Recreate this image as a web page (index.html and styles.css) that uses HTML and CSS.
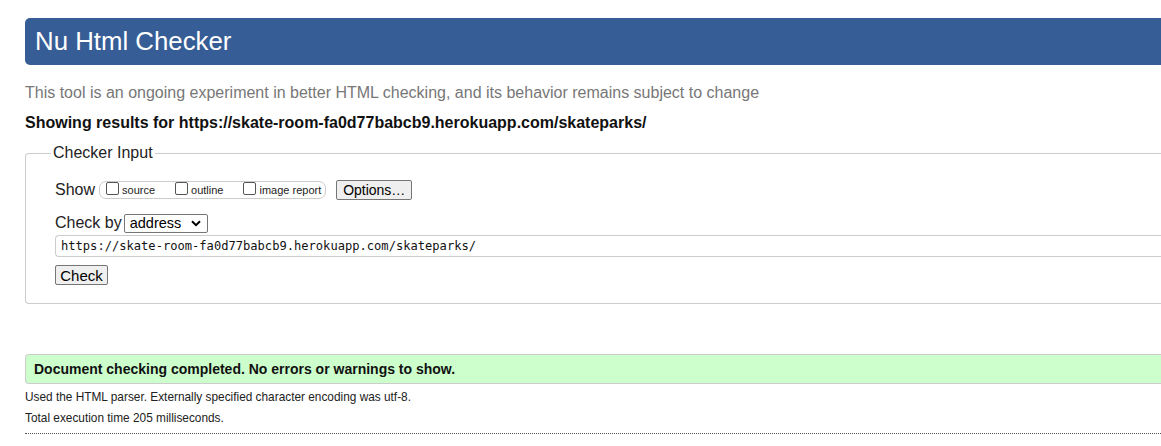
FILE: index.html
```html
<!DOCTYPE html>
<html>
<head>
<meta charset="utf-8">
<title>Nu Html Checker</title>
<link rel="stylesheet" href="styles.css">
</head>
<body>
<div class="page">
  <h1 class="title">Nu Html Checker</h1>
  <p class="intro">This tool is an ongoing experiment in better HTML checking, and its behavior remains subject to change</p>
  <p class="showing">Showing results for https://skate-room-fa0d77babcb9.herokuapp.com/skateparks/</p>
  <fieldset class="checker">
    <legend class="legend">Checker Input</legend>
    <div class="row show-row">
      <span class="label">Show</span>
      <span class="show-box">
        <label class="opt"><span class="cb"></span>source</label>
        <label class="opt"><span class="cb"></span>outline</label>
        <label class="opt"><span class="cb"></span>image report</label>
      </span>
      <span class="btn options">Options…</span>
    </div>
    <div class="row by-row">
      <span class="label">Check by</span>
      <span class="select">address<svg class="chev" width="10" height="7" viewBox="0 0 10 7"><path d="M1 1.2 L5 5.2 L9 1.2" fill="none" stroke="#000" stroke-width="2"/></svg></span>
    </div>
    <div class="url">https://skate-room-fa0d77babcb9.herokuapp.com/skateparks/</div>
    <div class="row check-row"><span class="btn check">Check</span></div>
  </fieldset>
  <div class="success">Document checking completed. No errors or warnings to show.</div>
  <p class="details">Used the HTML parser. Externally specified character encoding was utf-8.</p>
  <p class="details">Total execution time 205 milliseconds.</p>
  <div class="dotted"></div>
</div>
</body>
</html>
```

FILE: styles.css
```css
html, body {
  margin: 0;
  padding: 0;
  background: #fff;
  overflow: hidden;
}
body {
  font-family: "Liberation Sans", Arial, sans-serif;
  color: #222;
}
.page {
  width: 1200px;
  padding: 18px 0 0 25px;
}
.title {
  margin: 0;
  height: 47px;
  box-sizing: border-box;
  padding: 8px 0 0 10px;
  background: #365d95;
  color: #fff;
  font-weight: normal;
  font-size: 25.8px;
  line-height: 30px;
  border-radius: 5px 0 0 5px;
}
.intro {
  margin: 18px 0 0 0;
  font-size: 16px;
  line-height: 20px;
  color: #777;
}
.showing {
  margin: 10px 0 0 0;
  font-size: 16px;
  line-height: 20px;
  font-weight: bold;
  color: #111;
}
.checker {
  margin: 11px 0 0 0;
  border: 1px solid #ccc;
  border-right: none;
  border-radius: 4px 0 0 4px;
  padding: 0 0 17px 29px;
  min-width: 0;
  height: 160px;
  box-sizing: border-box;
}
.legend {
  margin-left: -4px;
  padding: 0 2px;
  font-size: 16px;
  color: #222;
}
.row {
  display: flex;
  align-items: center;
}
.label {
  font-size: 16px;
  color: #222;
}
.show-row {
  margin-top: 17px;
  height: 22px;
}
.show-box {
  display: flex;
  align-items: center;
  margin-left: 4px;
  height: 16px;
  border: 1px solid #ccc;
  border-radius: 7px;
  padding: 0 4px 0 6px;
  font-size: 11px;
  color: #222;
}
.opt {
  display: flex;
  align-items: center;
  margin-right: 20px;
}
.opt:last-child {
  margin-right: 0;
}
.cb {
  width: 11px;
  height: 11px;
  border: 1px solid #555;
  border-radius: 2px;
  margin-right: 3px;
  margin-top: -3px;
}
.btn {
  display: inline-flex;
  align-items: center;
  justify-content: center;
  box-sizing: border-box;
  height: 20px;
  background: #efefef;
  border: 1px solid #767676;
  border-radius: 2px;
  font-size: 14px;
  color: #000;
}
.options {
  margin-left: 10px;
  width: 76px;
}
.by-row {
  margin-top: 12px;
  height: 20px;
}
.select {
  display: inline-flex;
  align-items: center;
  box-sizing: border-box;
  margin-left: 2px;
  width: 84px;
  height: 19px;
  border: 1px solid #767676;
  border-radius: 2px;
  padding-left: 5px;
  font-size: 14.5px;
  color: #000;
}
.chev {
  margin-left: auto;
  margin-right: 6px;
}
.url {
  margin-top: 2px;
  height: 22px;
  box-sizing: border-box;
  border: 1px solid #ccc;
  border-right: none;
  border-radius: 4px 0 0 4px;
  padding: 3px 0 0 5px;
  font-family: "DejaVu Sans Mono", "Liberation Mono", monospace;
  font-size: 12.1px;
  line-height: 15px;
  color: #111;
}
.check-row {
  margin-top: 8px;
}
.check {
  width: 53px;
  font-size: 15px;
}
.success {
  margin-top: 50px;
  height: 30px;
  box-sizing: border-box;
  background: #ccffcc;
  border: 1px solid #ccc;
  border-right: none;
  border-radius: 4px 0 0 4px;
  padding: 5px 0 0 8px;
  font-size: 14px;
  line-height: 18px;
  font-weight: bold;
  color: #111;
}
.details {
  margin: 6px 0 0 0;
  font-size: 11.85px;
  line-height: 15px;
  color: #222;
}
.dotted {
  margin-top: 7px;
  border-top: 1px dotted #555;
}
```
